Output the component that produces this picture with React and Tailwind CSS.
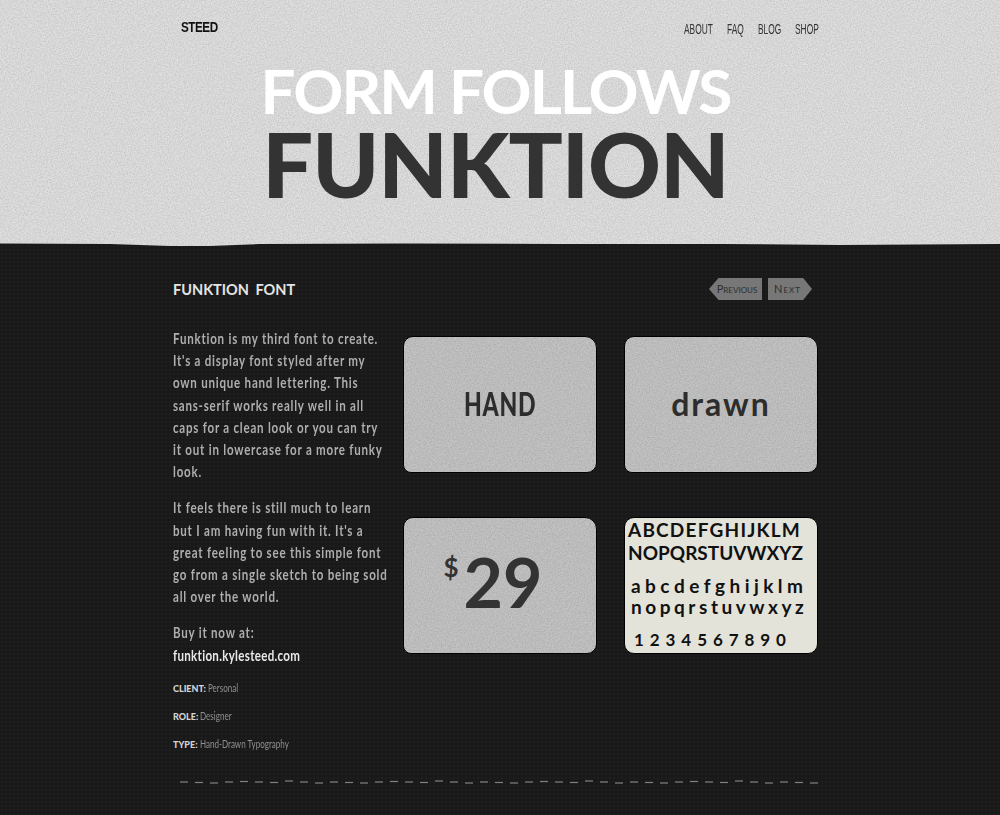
import React from "react";

const navLinks = [
  { name: "ABOUT", width: "w-[29px]" },
  { name: "FAQ", width: "w-[17px]" },
  { name: "BLOG", width: "w-[23px]" },
  { name: "SHOP", width: "w-[23px]" },
];

const details = [
  { label: "CLIENT:", value: "Personal" },
  { label: "ROLE:", value: "Designer" },
  { label: "TYPE:", value: "Hand-Drawn Typography" },
];

const glyphRows = [
  { text: "ABCDEFGHIJKLM", cls: "text-[19px] pl-[3px] pr-[17px] mt-[1px]" },
  { text: "NOPQRSTUVWXYZ", cls: "text-[19px] pl-[3px] pr-[15px] mt-[1px]" },
  { text: "abcdefghijklm", cls: "text-[19px] pl-[6px] pr-[14px] mt-[11px]" },
  { text: "nopqrstuvwxyz", cls: "text-[19px] pl-[6px] pr-[13px] mt-[-1px]" },
  { text: "1234567890", cls: "text-[17px] pl-[9px] pr-[31px] mt-[11px]" },
];

// the dashed rule at the bottom wobbles a little
const dashes = Array.from({ length: 43 }, (_, i) => ({
  x: i * 15,
  y: 3 + [0, 0.5, 1, 0, -0.5, 0, 0.5, -1, 0, 1][i % 10],
}));

function Grain({ id, opacity }) {
  return (
    <svg className="absolute inset-0 w-full h-full pointer-events-none" style={{ opacity }}>
      <filter id={id}>
        <feTurbulence type="fractalNoise" baseFrequency="0.7" numOctaves="3" stitchTiles="stitch" />
        <feColorMatrix values="0 0 0 0 0  0 0 0 0 0  0 0 0 0 0  1.4 0 0 0 -0.4" />
      </filter>
      <rect width="100%" height="100%" filter={`url(#${id})`} />
    </svg>
  );
}

function PaperCard({ id, children }) {
  return (
    <div className="relative h-[137px] bg-[#c4c4c4] border-[1.5px] border-black rounded-tl-[10px] rounded-tr-[12px] rounded-bl-[8px] rounded-br-[10px] overflow-hidden flex items-center justify-center">
      <Grain id={id} opacity={0.14} />
      {children}
    </div>
  );
}

export default function App() {
  return (
    <div className="h-[815px] overflow-hidden bg-[#191919] bg-[radial-gradient(#1f1f1f_1px,transparent_1px)] bg-[length:4px_4px] font-['Lato',sans-serif]">
      {/* Paper header */}
      <header className="relative h-[246px] bg-[#e0e0e0] overflow-hidden">
        <Grain id="paper-head" opacity={0.14} />
        <div className="relative w-[638px] ml-[181px] pt-[18px] flex justify-between">
          <span className="text-[#111] text-[15px] font-bold tracking-[-0.6px] leading-[18px] font-['Liberation_Sans',sans-serif] origin-left scale-x-[0.78] w-[36px] whitespace-nowrap">
            STEED
          </span>
          <nav className="flex gap-[14px] mt-[4px] mr-[1px]">
            {navLinks.map((link) => (
              <a
                key={link.name}
                className={`${link.width} text-[#333] text-[14px] leading-[14px] font-['Liberation_Sans',sans-serif] origin-left scale-x-[0.6] whitespace-nowrap`}
              >
                {link.name}
              </a>
            ))}
          </nav>
        </div>
        <h1 className="relative text-center mt-[23px] ml-[-9px]">
          <span className="block text-white text-[62px] leading-[62px] font-bold tracking-[-2px] whitespace-nowrap">
            FORM FOLLOWS
          </span>
          <span className="block text-[#333] text-[90px] leading-[84px] font-black tracking-[-1px] whitespace-nowrap">
            FUNKTION
          </span>
        </h1>
        {/* torn edge */}
        <svg className="absolute left-0 bottom-0 w-full h-[5px]" viewBox="0 0 1000 5" preserveAspectRatio="none">
          <path
            d="M0 2.5 L110 3 L170 5 L210 5 L260 3 L400 2.5 L560 3 L720 3 L840 4 L1000 3 L1000 5 L0 5 Z"
            fill="#191919"
          />
        </svg>
      </header>

      <main className="w-[645px] ml-[173px] pt-[33px]">
        <div className="flex justify-between items-start">
          <h2 className="text-[#e4e4e4] text-[14.5px] leading-[22px] font-bold tracking-[0px] [word-spacing:3px]">
            FUNKTION FONT
          </h2>
          <div className="flex gap-[6px] mt-[-1px] mr-[6px]">
            <a className="w-[53px] h-[22px] bg-[#777] text-[#2e2e2e] text-[11px] pl-[3px] flex items-center justify-center [clip-path:polygon(18%_0,100%_0,100%_100%,18%_100%,0_50%)] [font-variant:small-caps]">
              Previous
            </a>
            <a className="w-[44px] h-[22px] bg-[#777] text-[#2e2e2e] text-[11px] pr-[5px] flex items-center justify-center [clip-path:polygon(0_0,80%_0,100%_50%,80%_100%,0_100%)] tracking-[1px] [font-variant:small-caps]">
              Next
            </a>
          </div>
        </div>

        <div className="flex mt-[26px]">
          {/* Copy */}
          <div className="w-[230px] text-[#aeaeae] text-[15px] leading-[22.2px] tracking-[1px] whitespace-nowrap font-bold">
            <p className="origin-left scale-x-[0.77]">
              Funktion is my third font to create.
              <br />
              It's a display font styled after my
              <br />
              own unique hand lettering. This
              <br />
              sans-serif works really well in all
              <br />
              caps for a clean look or you can try
              <br />
              it out in lowercase for a more funky
              <br />
              look.
            </p>
            <p className="mt-[14px] origin-left scale-x-[0.77]">
              It feels there is still much to learn
              <br />
              but I am having fun with it. It's a
              <br />
              great feeling to see this simple font
              <br />
              go from a single sketch to being sold
              <br />
              all over the world.
            </p>
            <p className="mt-[14px] origin-left scale-x-[0.77]">
              Buy it now at:
              <br />
              <a className="text-[#e8e8e8] tracking-[0.4px]">funktion.kylesteed.com</a>
            </p>
            <ul className="mt-[9px] text-[9px] leading-[28px] tracking-normal">
              {details.map((item) => (
                <li key={item.label} className="h-[28px]">
                  <span className="text-[#d4d4d4] font-black">{item.label}</span>{" "}
                  <span className="inline-block text-[#8f8f8f] text-[12px] leading-[12px] font-normal origin-left scale-x-[0.67]">
                    {item.value}
                  </span>
                </li>
              ))}
            </ul>
          </div>

          {/* Samples */}
          <div className="w-[415px] grid grid-cols-2 gap-x-[27px] gap-y-[44px] self-start mt-[9px]">
            <PaperCard id="paper-a">
              <span className="relative text-[#2d2d2d] text-[32px] font-black tracking-[1px] scale-x-[0.72] mt-[-2px]">
                HAND
              </span>
            </PaperCard>
            <PaperCard id="paper-b">
              <span className="relative text-[#2d2d2d] text-[32px] font-bold tracking-[2px] mt-[-2px]">drawn</span>
            </PaperCard>
            <PaperCard id="paper-c">
              <div className="relative flex items-start mr-[14px] mt-[-7px]">
                <span className="text-[#333] text-[26px] font-bold leading-[26px] mr-[5px] mt-[-1px]">$</span>
                <span className="text-[#333] text-[68px] font-bold leading-[54px]">29</span>
              </div>
            </PaperCard>
            <div className="h-[137px] bg-[#e3e3da] border-[1.5px] border-black rounded-[10px] font-bold text-[#111] leading-[22px] flex flex-col overflow-hidden">
              {glyphRows.map((row) => (
                <div key={row.text} className={`flex justify-between ${row.cls}`}>
                  {row.text.split("").map((ch, i) => (
                    <span key={i}>{ch}</span>
                  ))}
                </div>
              ))}
            </div>
          </div>
        </div>

        <svg className="block mt-[20px] ml-[7px] w-[640px] h-[6px]">
          {dashes.map((d) => (
            <line key={d.x} x1={d.x} x2={d.x + 8} y1={d.y} y2={d.y} stroke="#808080" strokeWidth="1.2" />
          ))}
        </svg>
      </main>
    </div>
  );
}
